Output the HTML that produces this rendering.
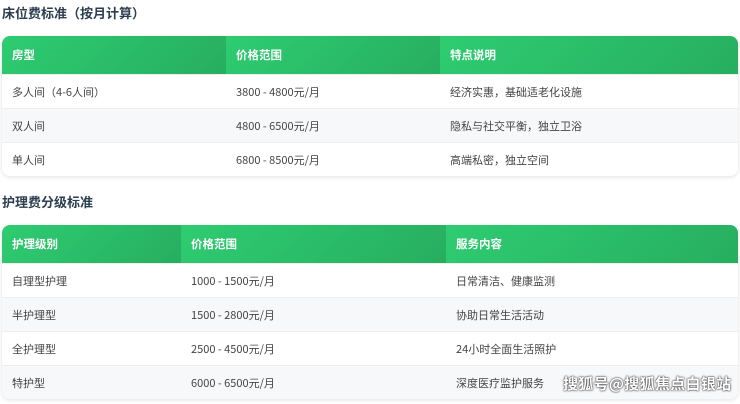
<!DOCTYPE html>
<html><head><meta charset="utf-8"><style>
body{margin:0;width:740px;height:404px;background:#fff;font-family:"Noto Sans CJK SC","Liberation Sans",sans-serif;position:relative;overflow:hidden}
.t{position:absolute;left:2px;font-size:13px;font-weight:bold;color:#2c3e50;line-height:18px}
table{position:absolute;left:2px;width:736px;border-collapse:collapse;border-radius:8px;overflow:hidden;box-shadow:0 1px 4px rgba(0,0,0,.12)}
th{background:linear-gradient(135deg,#2ecc71,#27ae60);color:#fff;font-size:11.5px;font-weight:bold;text-align:left;padding:0 10px;height:38px;line-height:14px}
td{font-size:11px;color:#444;padding:0 10px;height:33px;border-top:1px solid #eee;line-height:14px}
tr:nth-child(odd) td{background:#f7f8fa}
.wm{position:absolute;left:563px;top:374px;font-size:15px;font-weight:bold;color:#fff;text-shadow:0 0 2px #333,0 0 1px #000;letter-spacing:0.3px;line-height:20px}
</style></head><body>
<div class="t" style="top:4px">床位费标准（按月计算）</div>
<table style="top:36px">
<tr><th style="width:204px">房型</th><th style="width:194px">价格范围</th><th>特点说明</th></tr>
<tr><td>多人间（4-6人间）</td><td>3800 - 4800元/月</td><td>经济实惠，基础适老化设施</td></tr>
<tr><td>双人间</td><td>4800 - 6500元/月</td><td>隐私与社交平衡，独立卫浴</td></tr>
<tr><td>单人间</td><td>6800 - 8500元/月</td><td>高端私密，独立空间</td></tr>
</table>
<div class="t" style="top:193px">护理费分级标准</div>
<table style="top:225px">
<tr><th style="width:159px">护理级别</th><th style="width:245px">价格范围</th><th>服务内容</th></tr>
<tr><td>自理型护理</td><td>1000 - 1500元/月</td><td>日常清洁、健康监测</td></tr>
<tr><td>半护理型</td><td>1500 - 2800元/月</td><td>协助日常生活活动</td></tr>
<tr><td>全护理型</td><td>2500 - 4500元/月</td><td>24小时全面生活照护</td></tr>
<tr><td>特护型</td><td>6000 - 6500元/月</td><td>深度医疗监护服务</td></tr>
</table>
<div class="wm">搜狐号@搜狐焦点白银站</div>
</body></html>
